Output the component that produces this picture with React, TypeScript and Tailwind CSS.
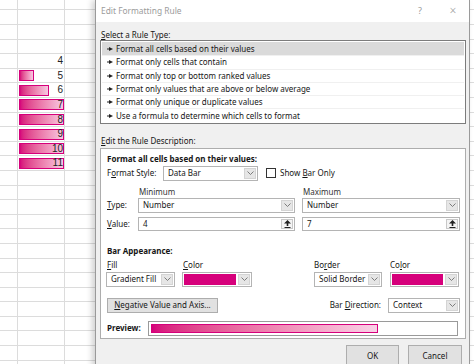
import React from 'react';

const rules = [
  'Format all cells based on their values',
  'Format only cells that contain',
  'Format only top or bottom ranked values',
  'Format only values that are above or below average',
  'Format only unique or duplicate values',
  'Use a formula to determine which cells to format',
];

const Chevron = () => (
  <svg width="7" height="4" viewBox="0 0 7 4">
    <polyline points="0.5,0.5 3.5,3.5 6.5,0.5" fill="none" stroke="#6f6f6f" strokeWidth="0.9" />
  </svg>
);

const Arrow = () => (
  <svg width="6" height="4" viewBox="0 0 6 4" className="shrink-0">
    <rect x="0" y="1.5" width="3" height="1" fill="#222" />
    <polygon points="2,0 6,2 2,4" fill="#222" />
  </svg>
);

const UpButton = () => (
  <div className="m-[1px] flex w-[12px] items-center justify-center border border-[#c8c8c8] bg-[#f4f4f4]">
    <svg width="7" height="8" viewBox="0 0 7 8">
      <polygon points="3.5,0 7,3.5 4.3,3.5 4.3,6 2.7,6 2.7,3.5 0,3.5" fill="#222" />
      <rect x="0.5" y="7" width="6" height="1" fill="#222" />
    </svg>
  </div>
);

const Select = ({ className, children }: { className: string; children: React.ReactNode }) => (
  <div className={`flex h-[15px] items-stretch border border-[#b4b4b4] bg-white ${className}`}>
    <div className="flex flex-1 items-center overflow-hidden pl-[4px] whitespace-nowrap">{children}</div>
    <div className="m-[1px] flex w-[12px] items-center justify-center border border-[#d4d4d4] bg-[#e6e6e6]">
      <Chevron />
    </div>
  </div>
);

const ColorPick = () => (
  <div className="mt-[1px] flex h-[15px] items-stretch border border-[#b4b4b4] bg-white">
    <div className="m-[1px] flex-1 bg-[#d6007b]" />
    <div className="m-[1px] flex w-[12px] items-center justify-center border border-[#d4d4d4] bg-[#e6e6e6]">
      <Chevron />
    </div>
  </div>
);

const Input = ({ className, value }: { className: string; value: string }) => (
  <div className={`flex h-[14px] items-stretch border border-[#b4b4b4] bg-white ${className}`}>
    <div className="flex flex-1 items-center pl-[4px]">{value}</div>
    <UpButton />
  </div>
);

const Sheet = () => {
  const rows = Array.from({ length: 27 }, (_, i) => i);
  return (
    <div className="-mt-[4.2px] font-['Liberation_Sans',sans-serif] text-[10px] text-[#222]">
      {rows.map((i) => {
        const v = i >= 4 && i <= 11 ? i : null;
        const w = v === null ? 0 : Math.min(45, (45 * (v - 4)) / 3);
        return (
          <div key={i} className="flex h-[14.6px] border-b border-[#dcdcdc]">
            <div className="w-[18px] shrink-0 border-r border-[#dcdcdc]" />
            <div className="relative w-[47px] shrink-0 border-r border-[#dcdcdc]">
              {w > 0 && (
                <div
                  className="absolute left-[1px] top-[1.5px] h-[11px] border border-[#d6007b] bg-gradient-to-r from-[#d6007b] to-[#f6c8e1]"
                  style={{ width: w }}
                />
              )}
              {v !== null && <span className="absolute right-[1px] top-[0px] leading-[14px]">{v}</span>}
            </div>
            {Array.from({ length: 9 }, (_, k) => (
              <div key={k} className="w-[47px] shrink-0 border-r border-[#dcdcdc]" />
            ))}
          </div>
        );
      })}
    </div>
  );
};

export default function App() {
  return (
    <div className="relative h-[364px] w-[474px] overflow-hidden bg-white">
      <Sheet />

      <div className="absolute left-[95px] top-0 flex h-[380px] w-[375px] flex-col border-x border-[#9a9a9a] bg-[#f0f0f0] font-['Segoe_UI','Noto_Sans',sans-serif] text-[8px] text-[#161616] shadow-[-3px_0_6px_rgba(0,0,0,0.18)]">
        <div className="flex h-[22px] shrink-0 items-center bg-white pl-[5px] text-[8.4px] text-[#9b9b9b]">
          <span className="flex-1">Edit Formatting Rule</span>
          <span className="w-[10px] text-center text-[9px]">?</span>
          <span className="ml-[22px] mr-[10px] w-[12px] text-center text-[12px] font-light leading-none">×</span>
        </div>

        <div className="flex flex-col pl-[4px] pr-[3px]">
          <div className="mt-[7px] pl-[1px] leading-[11px]">
            <u>S</u>elect a Rule Type:
          </div>
          <div className="flex w-[366px] flex-col border border-[#7c7c7c] bg-white p-[1px]">
            {rules.map((r, i) => (
              <div
                key={r}
                className={`flex h-[13.3px] items-center gap-[3px] pl-[5px] ${i === 0 ? 'bg-[#dadada]' : 'border-t border-[#f0f0f0]'}`}
              >
                <Arrow />
                <span className="whitespace-nowrap">{r}</span>
              </div>
            ))}
          </div>

          <div className="mt-[11.5px] pl-[1px] leading-[11px]">
            <u>E</u>dit the Rule Description:
          </div>
          <div className="mt-[1.5px] flex w-[366px] flex-col border border-[#adadad] bg-white pt-[4px] pb-[2px]">
            <div className="pl-[6px] font-bold leading-[12px]">Format all cells based on their values:</div>

            <div className="mt-[1px] flex h-[15px] items-center pl-[6px]">
              <span className="w-[56px]">
                F<u>o</u>rmat Style:
              </span>
              <Select className="w-[95px]">Data Bar</Select>
              <div className="ml-[8px] h-[10px] w-[10px] border border-[#333] bg-white" />
              <span className="ml-[4px]">
                Show <u>B</u>ar Only
              </span>
            </div>

            <div className="mt-[5px] flex pl-[38px] leading-[12px] text-[#333]">
              <span className="w-[164px]">Minimum</span>
              <span>Maximum</span>
            </div>

            <div className="flex h-[15px] items-center pl-[6px]">
              <span className="w-[31px]">
                <u>T</u>ype:
              </span>
              <Select className="w-[157px]">Number</Select>
              <Select className="ml-[7px] w-[158px]">Number</Select>
            </div>

            <div className="mt-[4px] flex h-[14px] items-center pl-[6px]">
              <span className="w-[31px]">
                <u>V</u>alue:
              </span>
              <Input className="w-[157px]" value="4" />
              <Input className="ml-[7px] w-[158px]" value="7" />
            </div>

            <div className="mt-[14px] pl-[6px] font-bold leading-[12px]">Bar Appearance:</div>

            <div className="mt-[2px] flex pl-[5px]">
              <div className="flex w-[69px] flex-col">
                <span className="pl-[1px] leading-[12px]">
                  <u>F</u>ill
                </span>
                <Select className="mt-[1px] w-[69px]">Gradient Fill</Select>
              </div>
              <div className="ml-[7px] flex w-[70px] flex-col">
                <span className="pl-[1px] leading-[12px]">
                  <u>C</u>olor
                </span>
                <ColorPick />
              </div>
              <div className="ml-[62px] flex w-[68px] flex-col">
                <span className="leading-[12px]">
                  Bo<u>r</u>der
                </span>
                <Select className="mt-[1px] w-[68px]">Solid Border</Select>
              </div>
              <div className="ml-[8px] flex w-[69px] flex-col">
                <span className="leading-[12px]">
                  Co<u>l</u>or
                </span>
                <ColorPick />
              </div>
            </div>

            <div className="mt-[11px] flex h-[15px] items-center pl-[6px] pr-[5px]">
              <div className="flex h-[15px] w-[111px] items-center justify-center border border-[#adadad] bg-[#e1e1e1]">
                <span>
                  <u>N</u>egative Value and Axis...
                </span>
              </div>
              <span className="flex-1 text-right">
                Bar <u>D</u>irection:
              </span>
              <Select className="ml-[7px] w-[72px]">Context</Select>
            </div>

            <div className="mt-[8px] flex h-[15px] items-center pl-[6px]">
              <span className="w-[41px] font-bold">Preview:</span>
              <div className="flex h-[15px] w-[310px] items-center border border-[#9a9a9a] bg-white px-[2px]">
                <div className="h-[9px] w-[227px] border border-[#d6007b] bg-gradient-to-r from-[#d6007b] to-[#f8d2e7]" />
              </div>
            </div>
          </div>

          <div className="mt-[6px] flex justify-end gap-[9px] pr-[4px]">
            <div className="flex h-[22px] w-[53px] items-center justify-center border border-[#adadad] bg-[#e1e1e1]">OK</div>
            <div className="flex h-[22px] w-[54px] items-center justify-center border border-[#adadad] bg-[#e1e1e1]">Cancel</div>
          </div>
        </div>
      </div>
    </div>
  );
}
